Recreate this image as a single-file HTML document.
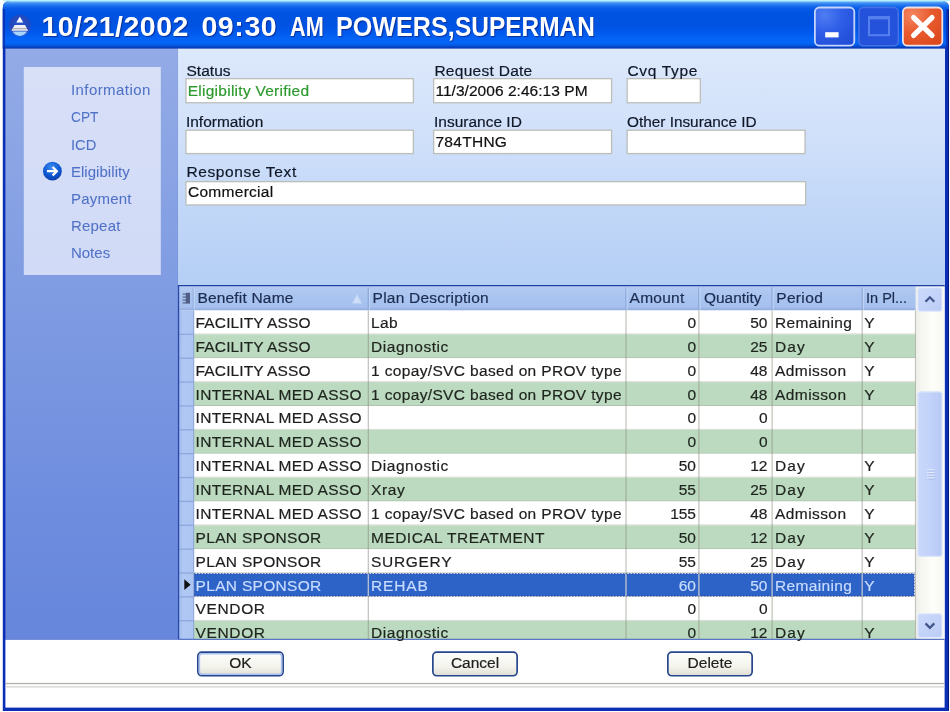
<!DOCTYPE html>
<html lang="en"><head><meta charset="utf-8"><title>10/21/2002 09:30 AM POWERS,SUPERMAN</title>
<style>
html,body{margin:0;padding:0;background:#fff;}
body{width:950px;height:712px;position:relative;overflow:hidden;font-family:"Liberation Sans",sans-serif;}
#bgsvg{filter:blur(0.4px);}
#txt{position:absolute;left:0;top:0;width:950px;height:712px;will-change:transform;filter:blur(0.4px);}
.t{position:absolute;white-space:nowrap;-webkit-text-stroke:0.2px currentColor;}
</style></head>
<body>
<svg id="bgsvg" width="950" height="712" viewBox="0 0 950 712" style="position:absolute;left:0;top:0">
<defs><linearGradient id="gt" x1="0" y1="0" x2="0" y2="1"><stop offset="0" stop-color="#a8e2f8"/><stop offset=".035" stop-color="#4a98f6"/><stop offset=".08" stop-color="#2578f0"/><stop offset=".15" stop-color="#0a5ce8"/><stop offset=".24" stop-color="#0054e3"/><stop offset=".45" stop-color="#0052e0"/><stop offset=".62" stop-color="#0056e8"/><stop offset=".78" stop-color="#0462f4"/><stop offset=".88" stop-color="#0566f6"/><stop offset=".93" stop-color="#0458e4"/><stop offset=".97" stop-color="#0540c0"/><stop offset="1" stop-color="#0836a8"/></linearGradient><linearGradient id="gs" x1="0" y1="0" x2="0" y2="1"><stop offset="0" stop-color="#93abe6"/><stop offset=".2" stop-color="#8aa4e4"/><stop offset=".5" stop-color="#7b98e1"/><stop offset=".8" stop-color="#6d8cde"/><stop offset="1" stop-color="#6686dc"/></linearGradient><linearGradient id="gsi" x1="0" y1="0" x2="0" y2="1"><stop offset="0" stop-color="#d8e0f8"/><stop offset="1" stop-color="#d1daf6"/></linearGradient><linearGradient id="gm" x1="0" y1="0" x2="0" y2="1"><stop offset="0" stop-color="#dce8fb"/><stop offset=".3" stop-color="#d3e2fa"/><stop offset=".65" stop-color="#c3d8f8"/><stop offset="1" stop-color="#b4cef5"/></linearGradient><linearGradient id="gh" x1="0" y1="0" x2="0" y2="1"><stop offset="0" stop-color="#b4cbf2"/><stop offset=".4" stop-color="#a9c4ef"/><stop offset=".85" stop-color="#a6c1ee"/><stop offset="1" stop-color="#8fa9dc"/></linearGradient><linearGradient id="grs" x1="0" y1="0" x2="1" y2="0"><stop offset="0" stop-color="#9db8ed"/><stop offset=".35" stop-color="#b0c8f3"/><stop offset="1" stop-color="#acc5f2"/></linearGradient><linearGradient id="gsb" x1="0" y1="0" x2="1" y2="0"><stop offset="0" stop-color="#eeeee8"/><stop offset=".2" stop-color="#f7f7f1"/><stop offset=".6" stop-color="#fdfdf9"/><stop offset="1" stop-color="#f8f8f3"/></linearGradient><linearGradient id="gth" x1="0" y1="0" x2="1" y2="0"><stop offset="0" stop-color="#c9d7fb"/><stop offset=".5" stop-color="#c2d2f9"/><stop offset="1" stop-color="#b7caf5"/></linearGradient><linearGradient id="gsbb" x1="0" y1="0" x2="1" y2="1"><stop offset="0" stop-color="#cbd9fb"/><stop offset="1" stop-color="#bccdf6"/></linearGradient><linearGradient id="gbtn" x1="0" y1="0" x2="0" y2="1"><stop offset="0" stop-color="#fdfdfb"/><stop offset=".6" stop-color="#f4f4ee"/><stop offset="1" stop-color="#e0ded4"/></linearGradient><radialGradient id="gcb" cx="25%" cy="20%" r="90%"><stop offset="0" stop-color="#4f7cf2"/><stop offset=".5" stop-color="#2f5fe8"/><stop offset="1" stop-color="#224ed8"/></radialGradient><radialGradient id="gcx" cx="25%" cy="20%" r="90%"><stop offset="0" stop-color="#f38660"/><stop offset=".5" stop-color="#e95c30"/><stop offset="1" stop-color="#dd4a1c"/></radialGradient><radialGradient id="ag" cx="50%" cy="40%" r="60%"><stop offset="0" stop-color="#2f55c8"/><stop offset=".8" stop-color="#2344b4"/><stop offset="1" stop-color="#3c66d8"/></radialGradient><radialGradient id="bg" cx="45%" cy="30%" r="70%"><stop offset="0" stop-color="#3f8cf0"/><stop offset=".6" stop-color="#0f5ad4"/><stop offset="1" stop-color="#0a3ea8"/></radialGradient><clipPath id="gclip"><rect x="177.400" y="284.9" width="767.6" height="355.4"/></clipPath></defs>
<rect x="3" y="0" width="947" height="1.1" fill="#b6f0fa"/>
<path d="M2.8 711 L2.800 8 Q2.800 1 9.8 1 L942 1 Q949 1 949 8 L949 711 Z" fill="#0a2fb4"/>
<path d="M2.8 48.6 L2.800 8 Q2.800 1 9.8 1 L942 1 Q949 1 949 8 L949 48.6 Z" fill="url(#gt)"/>
<rect x="2.8" y="9" width="2.2" height="39.6" fill="#0a2aa8" opacity=".75"/><rect x="946" y="9" width="3" height="39.6" fill="#0a2aa8" opacity=".75"/>
<rect x="948" y="10" width="1" height="701" fill="#06187c"/>
<g transform="translate(7,12.5)"><circle cx="12.8" cy="13" r="10.8" fill="url(#ag)" opacity=".9"/><path d="M12.8 4.2 L16.300 9.900 L9.300 9.900 Z" fill="#fff"/><path d="M7.6 12.6 L18 12.6 L21.2 18.2 L4.4 18.2 Z" fill="#f2f2f6"/><rect x="5.6" y="15.4" width="14.4" height="1.5" fill="#b4b4bc"/><path d="M5.6 19 L20 19 Q17 23.4 12.8 23.4 Q8.600 23.4 5.600 19 Z" fill="#a6d6fb"/></g>
<rect x="814.9" y="7.5" width="39.4" height="38.2" rx="4.5" fill="url(#gcb)" stroke="#c4d4fa" stroke-width="1.8"/><rect x="825.2" y="32.2" width="13.4" height="5.2" fill="#fff"/>
<rect x="858.9" y="7.5" width="39.4" height="38.2" rx="4.5" fill="#2552da" stroke="#4672e6" stroke-width="1.5"/><rect x="869" y="17.200" width="20" height="18" fill="none" stroke="#5580ee" stroke-width="2"/><rect x="868" y="16.200" width="22" height="3.2" fill="#5580ee"/>
<rect x="902.9" y="7.5" width="39.4" height="38.2" rx="4.5" fill="url(#gcx)" stroke="#efe0e4" stroke-width="1.8"/><path d="M913.6 17.6 L932 35.4 M932 17.6 L913.600 35.4" stroke="#fff" stroke-width="5.2" stroke-linecap="round" fill="none"/>
<rect x="5.4" y="48.6" width="172.4" height="591.2" fill="url(#gs)"/>
<rect x="23.8" y="67" width="137" height="208" fill="url(#gsi)"/>
<g transform="translate(41.4,160.2)"><circle cx="11" cy="11" r="9.4" fill="url(#bg)"/><path d="M5.6 11 L15 11 M11.2 6.800 L15.400 11 L11.200 15.2" fill="none" stroke="#fff" stroke-width="2.3"/></g>
<rect x="177.800" y="48.6" width="767.2" height="236.8" fill="url(#gm)"/>
<rect x="185.95" y="78.65" width="227.40" height="24.10" fill="#fff" stroke="#bcbeba" stroke-width="1.3"/>
<rect x="433.65" y="78.65" width="177.90" height="24.10" fill="#fff" stroke="#bcbeba" stroke-width="1.3"/>
<rect x="627.15" y="78.65" width="73.20" height="24.10" fill="#fff" stroke="#bcbeba" stroke-width="1.3"/>
<rect x="185.95" y="130.25" width="227.40" height="23.30" fill="#fff" stroke="#bcbeba" stroke-width="1.3"/>
<rect x="433.65" y="130.25" width="177.90" height="23.30" fill="#fff" stroke="#bcbeba" stroke-width="1.3"/>
<rect x="627.15" y="130.25" width="177.90" height="23.30" fill="#fff" stroke="#bcbeba" stroke-width="1.3"/>
<rect x="185.95" y="181.65" width="619.70" height="23.30" fill="#fff" stroke="#bcbeba" stroke-width="1.3"/>
<g clip-path="url(#gclip)">
<rect x="177.8" y="285.3" width="766.8" height="354.49999999999994" fill="#fff"/>
<rect x="177.8" y="286.3" width="737.9000000000001" height="24.20" fill="url(#gh)"/>
<rect x="194" y="310.50" width="721.70" height="23.87" fill="#fff"/>
<rect x="194" y="333.47" width="721.70" height="0.9" fill="#9a9a90" opacity=".4"/>
<rect x="194" y="334.37" width="721.70" height="23.87" fill="#bcdabf"/>
<rect x="194" y="357.34" width="721.70" height="0.9" fill="#9a9a90" opacity=".4"/>
<rect x="194" y="358.24" width="721.70" height="23.87" fill="#fff"/>
<rect x="194" y="381.21" width="721.70" height="0.9" fill="#9a9a90" opacity=".4"/>
<rect x="194" y="382.11" width="721.70" height="23.87" fill="#bcdabf"/>
<rect x="194" y="405.08" width="721.70" height="0.9" fill="#9a9a90" opacity=".4"/>
<rect x="194" y="405.98" width="721.70" height="23.87" fill="#fff"/>
<rect x="194" y="428.95" width="721.70" height="0.9" fill="#9a9a90" opacity=".4"/>
<rect x="194" y="429.85" width="721.70" height="23.87" fill="#bcdabf"/>
<rect x="194" y="452.82" width="721.70" height="0.9" fill="#9a9a90" opacity=".4"/>
<rect x="194" y="453.72" width="721.70" height="23.87" fill="#fff"/>
<rect x="194" y="476.69" width="721.70" height="0.9" fill="#9a9a90" opacity=".4"/>
<rect x="194" y="477.59" width="721.70" height="23.87" fill="#bcdabf"/>
<rect x="194" y="500.56" width="721.70" height="0.9" fill="#9a9a90" opacity=".4"/>
<rect x="194" y="501.46" width="721.70" height="23.87" fill="#fff"/>
<rect x="194" y="524.43" width="721.70" height="0.9" fill="#9a9a90" opacity=".4"/>
<rect x="194" y="525.33" width="721.70" height="23.87" fill="#bcdabf"/>
<rect x="194" y="548.30" width="721.70" height="0.9" fill="#9a9a90" opacity=".4"/>
<rect x="194" y="549.20" width="721.70" height="23.87" fill="#fff"/>
<rect x="194" y="572.17" width="721.70" height="0.9" fill="#9a9a90" opacity=".4"/>
<rect x="194" y="573.07" width="721.70" height="23.87" fill="#fff"/>
<rect x="194" y="596.04" width="721.70" height="0.9" fill="#9a9a90" opacity=".4"/>
<rect x="194" y="573.77" width="720.10" height="22.27" fill="#2d62c7" stroke="#2a4a9c" stroke-width="1" stroke-dasharray="1.5 1.5"/>
<rect x="194" y="596.94" width="721.70" height="23.87" fill="#fff"/>
<rect x="194" y="619.91" width="721.70" height="0.9" fill="#9a9a90" opacity=".4"/>
<rect x="194" y="620.81" width="721.70" height="23.87" fill="#bcdabf"/>
<rect x="194" y="643.78" width="721.70" height="0.9" fill="#9a9a90" opacity=".4"/>
<rect x="177.8" y="310.5" width="16.20" height="329.30" fill="url(#grs)"/>
<rect x="192.7" y="287.50" width="1" height="22" fill="#8aa6da"/><rect x="193.7" y="287.50" width="1" height="22" fill="#c6d8f6"/>
<rect x="193.2" y="310.5" width="1" height="329.30" fill="#8ea4d4"/>
<rect x="177.8" y="333.67" width="16.20" height="1.3" fill="#8fa7de"/>
<rect x="177.8" y="357.54" width="16.20" height="1.3" fill="#8fa7de"/>
<rect x="177.8" y="381.41" width="16.20" height="1.3" fill="#8fa7de"/>
<rect x="177.8" y="405.28" width="16.20" height="1.3" fill="#8fa7de"/>
<rect x="177.8" y="429.15" width="16.20" height="1.3" fill="#8fa7de"/>
<rect x="177.8" y="453.02" width="16.20" height="1.3" fill="#8fa7de"/>
<rect x="177.8" y="476.89" width="16.20" height="1.3" fill="#8fa7de"/>
<rect x="177.8" y="500.76" width="16.20" height="1.3" fill="#8fa7de"/>
<rect x="177.8" y="524.63" width="16.20" height="1.3" fill="#8fa7de"/>
<rect x="177.8" y="548.50" width="16.20" height="1.3" fill="#8fa7de"/>
<rect x="177.8" y="572.37" width="16.20" height="1.3" fill="#8fa7de"/>
<rect x="177.8" y="596.24" width="16.20" height="1.3" fill="#8fa7de"/>
<rect x="177.8" y="620.11" width="16.20" height="1.3" fill="#8fa7de"/>
<rect x="177.8" y="643.98" width="16.20" height="1.3" fill="#8fa7de"/>
<rect x="367.70" y="310.5" width="1.2" height="329.30" fill="#8c8c82" opacity=".55"/>
<rect x="367.70" y="287.50" width="1.2" height="22" fill="#86a2d8"/><rect x="368.90" y="287.50" width="1" height="22" fill="#c6d8f6"/>
<rect x="625.40" y="310.5" width="1.2" height="329.30" fill="#8c8c82" opacity=".55"/>
<rect x="625.40" y="287.50" width="1.2" height="22" fill="#86a2d8"/><rect x="626.60" y="287.50" width="1" height="22" fill="#c6d8f6"/>
<rect x="698.30" y="310.5" width="1.2" height="329.30" fill="#8c8c82" opacity=".55"/>
<rect x="698.30" y="287.50" width="1.2" height="22" fill="#86a2d8"/><rect x="699.50" y="287.50" width="1" height="22" fill="#c6d8f6"/>
<rect x="771.50" y="310.5" width="1.2" height="329.30" fill="#8c8c82" opacity=".55"/>
<rect x="771.50" y="287.50" width="1.2" height="22" fill="#86a2d8"/><rect x="772.70" y="287.50" width="1" height="22" fill="#c6d8f6"/>
<rect x="861.60" y="310.5" width="1.2" height="329.30" fill="#8c8c82" opacity=".55"/>
<rect x="861.60" y="287.50" width="1.2" height="22" fill="#86a2d8"/><rect x="862.80" y="287.50" width="1" height="22" fill="#c6d8f6"/>
<rect x="367.70" y="574.07" width="1.2" height="21.87" fill="#b9c6dc"/>
<rect x="625.40" y="574.07" width="1.2" height="21.87" fill="#b9c6dc"/>
<rect x="698.30" y="574.07" width="1.2" height="21.87" fill="#b9c6dc"/>
<rect x="771.50" y="574.07" width="1.2" height="21.87" fill="#b9c6dc"/>
<rect x="861.60" y="574.07" width="1.2" height="21.87" fill="#b9c6dc"/>
<rect x="914.90" y="310.5" width="1.4" height="329.30" fill="#a8a89e" opacity=".7"/>
<rect x="916.10" y="286.3" width="28.50" height="353.50" fill="url(#gsb)"/>
<rect x="917.8" y="287.6" width="24.2" height="23.8" rx="2.5" fill="url(#gsbb)" stroke="#e2eafc" stroke-width="1.2"/>
<path d="M925.5 301.7 L929.9 297.3 L934.3 301.7" fill="none" stroke="#44578c" stroke-width="2.3"/>
<rect x="917.8" y="391.8" width="24.2" height="164.6" rx="2.5" fill="url(#gth)" stroke="#dbe5fc" stroke-width="1.2"/>
<rect x="927" y="469.2" width="7.6" height="1.2" fill="#eaf0fe" opacity=".8"/><rect x="927.6" y="470.4" width="7.6" height="1.2" fill="#9fb4e6" opacity=".55"/>
<rect x="927" y="471.9" width="7.6" height="1.2" fill="#eaf0fe" opacity=".8"/><rect x="927.6" y="473.1" width="7.6" height="1.2" fill="#9fb4e6" opacity=".55"/>
<rect x="927" y="474.6" width="7.6" height="1.2" fill="#eaf0fe" opacity=".8"/><rect x="927.6" y="475.8" width="7.6" height="1.2" fill="#9fb4e6" opacity=".55"/>
<rect x="927" y="477.3" width="7.6" height="1.2" fill="#eaf0fe" opacity=".8"/><rect x="927.6" y="478.5" width="7.6" height="1.2" fill="#9fb4e6" opacity=".55"/>
<rect x="917.8" y="613.7" width="24.2" height="23.8" rx="2.5" fill="url(#gsbb)" stroke="#e2eafc" stroke-width="1.2"/>
<path d="M925.5 623.4 L929.9 627.8 L934.3 623.4" fill="none" stroke="#44578c" stroke-width="2.3"/>
<rect x="177.8" y="284.90000000000003" width="766.8" height="1.4" fill="#2040a4"/>
<rect x="177.8" y="285.3" width="1.4" height="354.49999999999994" fill="#2a48a8"/>
<rect x="177.8" y="638.8" width="766.8" height="1.4" fill="#3454b8"/>
</g>
<g fill="#4c5a82"><rect x="185.8" y="292.8" width="4.2" height="10.8" opacity=".95"/><rect x="182.6" y="293.4" width="3.4" height="1.4" opacity=".75"/><rect x="182.6" y="296.4" width="3.4" height="1.4" opacity=".75"/><rect x="182.6" y="299.4" width="3.4" height="1.4" opacity=".75"/><rect x="182.6" y="302.2" width="3.4" height="1.4" opacity=".75"/></g>
<path d="M357 294.4 L361.6 303.2 L352.400 303.2 Z" fill="#cfdff8" stroke="#bdd1f5" stroke-width="1"/>
<path d="M184.3 579.27 l6.3 5.4 l-6.3 5.4 Z" fill="#101010"/>
<rect x="5.4" y="639.8" width="939.2" height="67.8" fill="#fff"/>
<rect x="5.4" y="682.9" width="939.2" height="1.3" fill="#b2b2ae"/><rect x="5.4" y="686.2" width="939.2" height="1.3" fill="#d4d4d0"/>
<rect x="197.85" y="652.15" width="85.30" height="23.60" rx="4" fill="url(#gbtn)" stroke="#27478c" stroke-width="1.7"/>
<rect x="199.40" y="653.70" width="82.20" height="20.50" rx="2.5" fill="none" stroke="#a9c1f0" stroke-width="1.5"/>
<rect x="432.85" y="652.15" width="84.30" height="23.60" rx="4" fill="url(#gbtn)" stroke="#27478c" stroke-width="1.7"/>
<rect x="667.85" y="652.15" width="84.30" height="23.60" rx="4" fill="url(#gbtn)" stroke="#27478c" stroke-width="1.7"/>
</svg>
<div id="txt">
<span class="t" id="t0" style="font:700 28.5px/28.5px 'Liberation Sans',sans-serif;color:#fff;top:11.87px;left:41.40px;letter-spacing:0.477px;text-shadow:1px 1px 1px rgba(10,30,120,.7);-webkit-text-stroke:0;">10/21/2002</span>
<span class="t" id="t1" style="font:700 28.5px/28.5px 'Liberation Sans',sans-serif;color:#fff;top:11.87px;left:201.40px;letter-spacing:0.601px;text-shadow:1px 1px 1px rgba(10,30,120,.7);-webkit-text-stroke:0;">09:30</span>
<span class="t" id="t2" style="font:700 28.5px/28.5px 'Liberation Sans',sans-serif;color:#fff;top:11.87px;left:289.90px;transform:scaleX(0.7605);transform-origin:0 0;text-shadow:1px 1px 1px rgba(10,30,120,.7);-webkit-text-stroke:0;">AM</span>
<span class="t" id="t3" style="font:700 28.5px/28.5px 'Liberation Sans',sans-serif;color:#fff;top:11.87px;left:335.60px;transform:scaleX(0.8819);transform-origin:0 0;text-shadow:1px 1px 1px rgba(10,30,120,.7);-webkit-text-stroke:0;">POWERS,</span>
<span class="t" id="t4" style="font:700 28.5px/28.5px 'Liberation Sans',sans-serif;color:#fff;top:11.87px;left:455.30px;transform:scaleX(0.8572);transform-origin:0 0;text-shadow:1px 1px 1px rgba(10,30,120,.7);-webkit-text-stroke:0;">SUPERMAN</span>
<span class="t" id="t5" style="font:400 15px/15px 'Liberation Sans',sans-serif;color:#5071c6;top:82.30px;left:70.90px;letter-spacing:0.441px;-webkit-text-stroke:0.05px;">Information</span>
<span class="t" id="t6" style="font:400 15px/15px 'Liberation Sans',sans-serif;color:#5071c6;top:109.30px;left:70.90px;transform:scaleX(0.9133);transform-origin:0 0;-webkit-text-stroke:0.05px;">CPT</span>
<span class="t" id="t7" style="font:400 15px/15px 'Liberation Sans',sans-serif;color:#5071c6;top:136.90px;left:70.90px;transform:scaleX(0.9828);transform-origin:0 0;-webkit-text-stroke:0.05px;">ICD</span>
<span class="t" id="t8" style="font:400 15px/15px 'Liberation Sans',sans-serif;color:#5071c6;top:163.80px;left:70.90px;letter-spacing:0.049px;-webkit-text-stroke:0.05px;">Eligibility</span>
<span class="t" id="t9" style="font:400 15px/15px 'Liberation Sans',sans-serif;color:#5071c6;top:190.90px;left:70.90px;letter-spacing:0.242px;-webkit-text-stroke:0.05px;">Payment</span>
<span class="t" id="t10" style="font:400 15px/15px 'Liberation Sans',sans-serif;color:#5071c6;top:218.30px;left:70.90px;letter-spacing:0.221px;-webkit-text-stroke:0.05px;">Repeat</span>
<span class="t" id="t11" style="font:400 15px/15px 'Liberation Sans',sans-serif;color:#5071c6;top:245.30px;left:70.90px;letter-spacing:0.022px;-webkit-text-stroke:0.05px;">Notes</span>
<span class="t" id="t12" style="font:400 15.5px/15.5px 'Liberation Sans',sans-serif;color:#101828;top:62.88px;left:186.40px;letter-spacing:0.046px;">Status</span>
<span class="t" id="t13" style="font:400 15.5px/15.5px 'Liberation Sans',sans-serif;color:#101828;top:62.88px;left:434.40px;letter-spacing:0.279px;">Request Date</span>
<span class="t" id="t14" style="font:400 15.5px/15.5px 'Liberation Sans',sans-serif;color:#101828;top:62.88px;left:627.40px;letter-spacing:0.691px;">Cvq Type</span>
<span class="t" id="t15" style="font:400 15.5px/15.5px 'Liberation Sans',sans-serif;color:#101828;top:114.08px;left:186.40px;transform:scaleX(0.9959);transform-origin:0 0;">Information</span>
<span class="t" id="t16" style="font:400 15.5px/15.5px 'Liberation Sans',sans-serif;color:#101828;top:114.08px;left:434.40px;transform:scaleX(0.9993);transform-origin:0 0;">Insurance ID</span>
<span class="t" id="t17" style="font:400 15.5px/15.5px 'Liberation Sans',sans-serif;color:#101828;top:114.08px;left:627.40px;transform:scaleX(0.9899);transform-origin:0 0;">Other Insurance ID</span>
<span class="t" id="t18" style="font:400 15.5px/15.5px 'Liberation Sans',sans-serif;color:#101828;top:163.58px;left:186.40px;letter-spacing:0.629px;">Response Text</span>
<span class="t" id="t19" style="font:400 15.5px/15.5px 'Liberation Sans',sans-serif;color:#2e9a2e;top:82.88px;left:187.70px;letter-spacing:0.266px;">Eligibility Verified</span>
<span class="t" id="t20" style="font:400 15.5px/15.5px 'Liberation Sans',sans-serif;color:#101010;top:82.88px;left:435.40px;letter-spacing:0.042px;">11/3/2006 2:46:13 PM</span>
<span class="t" id="t21" style="font:400 15.5px/15.5px 'Liberation Sans',sans-serif;color:#101010;top:134.38px;left:435.40px;letter-spacing:0.293px;">784THNG</span>
<span class="t" id="t22" style="font:400 15.5px/15.5px 'Liberation Sans',sans-serif;color:#101010;top:184.08px;left:188.00px;letter-spacing:0.274px;">Commercial</span>
<span class="t" id="t23" style="font:400 15.5px/15.5px 'Liberation Sans',sans-serif;color:#1c2c50;top:290.38px;left:197.40px;letter-spacing:0.192px;">Benefit Name</span>
<span class="t" id="t24" style="font:400 15.5px/15.5px 'Liberation Sans',sans-serif;color:#1c2c50;top:290.38px;left:372.60px;letter-spacing:0.211px;">Plan Description</span>
<span class="t" id="t25" style="font:400 15.5px/15.5px 'Liberation Sans',sans-serif;color:#1c2c50;top:290.38px;left:629.60px;letter-spacing:0.251px;">Amount</span>
<span class="t" id="t26" style="font:400 15.5px/15.5px 'Liberation Sans',sans-serif;color:#1c2c50;top:290.38px;left:703.70px;transform:scaleX(0.9947);transform-origin:0 0;">Quantity</span>
<span class="t" id="t27" style="font:400 15.5px/15.5px 'Liberation Sans',sans-serif;color:#1c2c50;top:290.38px;left:776.20px;letter-spacing:0.353px;">Period</span>
<span class="t" id="t28" style="font:400 15.5px/15.5px 'Liberation Sans',sans-serif;color:#1c2c50;top:290.38px;left:865.80px;transform:scaleX(0.9361);transform-origin:0 0;">In Pl...</span>
<span class="t" id="t29" style="font:400 15.5px/15.5px 'Liberation Sans',sans-serif;color:#1e1e1e;top:314.98px;left:195.60px;letter-spacing:0.130px;">FACILITY ASSO</span>
<span class="t" id="t30" style="font:400 15.5px/15.5px 'Liberation Sans',sans-serif;color:#1e1e1e;top:314.98px;left:371.00px;letter-spacing:0.352px;">Lab</span>
<span class="t" id="t31" style="font:400 15.5px/15.5px 'Liberation Sans',sans-serif;color:#1e1e1e;top:314.98px;right:254.00px;">0</span>
<span class="t" id="t32" style="font:400 15.5px/15.5px 'Liberation Sans',sans-serif;color:#1e1e1e;top:314.98px;right:182.50px;">50</span>
<span class="t" id="t33" style="font:400 15.5px/15.5px 'Liberation Sans',sans-serif;color:#1e1e1e;top:314.98px;left:775.00px;letter-spacing:0.358px;">Remaining</span>
<span class="t" id="t34" style="font:400 15.5px/15.5px 'Liberation Sans',sans-serif;color:#1e1e1e;top:314.98px;left:864.20px;letter-spacing:2.586px;">Y</span>
<span class="t" id="t35" style="font:400 15.5px/15.5px 'Liberation Sans',sans-serif;color:#1e241e;top:338.85px;left:195.60px;letter-spacing:0.130px;">FACILITY ASSO</span>
<span class="t" id="t36" style="font:400 15.5px/15.5px 'Liberation Sans',sans-serif;color:#1e241e;top:338.85px;left:371.00px;letter-spacing:0.546px;">Diagnostic</span>
<span class="t" id="t37" style="font:400 15.5px/15.5px 'Liberation Sans',sans-serif;color:#1e241e;top:338.85px;right:254.00px;">0</span>
<span class="t" id="t38" style="font:400 15.5px/15.5px 'Liberation Sans',sans-serif;color:#1e241e;top:338.85px;right:182.50px;">25</span>
<span class="t" id="t39" style="font:400 15.5px/15.5px 'Liberation Sans',sans-serif;color:#1e241e;top:338.85px;left:775.00px;letter-spacing:1.151px;">Day</span>
<span class="t" id="t40" style="font:400 15.5px/15.5px 'Liberation Sans',sans-serif;color:#1e241e;top:338.85px;left:864.20px;letter-spacing:2.586px;">Y</span>
<span class="t" id="t41" style="font:400 15.5px/15.5px 'Liberation Sans',sans-serif;color:#1e1e1e;top:362.72px;left:195.60px;letter-spacing:0.130px;">FACILITY ASSO</span>
<span class="t" id="t42" style="font:400 15.5px/15.5px 'Liberation Sans',sans-serif;color:#1e1e1e;top:362.72px;left:371.00px;letter-spacing:0.351px;">1 copay/SVC based on PROV type</span>
<span class="t" id="t43" style="font:400 15.5px/15.5px 'Liberation Sans',sans-serif;color:#1e1e1e;top:362.72px;right:254.00px;">0</span>
<span class="t" id="t44" style="font:400 15.5px/15.5px 'Liberation Sans',sans-serif;color:#1e1e1e;top:362.72px;right:182.50px;">48</span>
<span class="t" id="t45" style="font:400 15.5px/15.5px 'Liberation Sans',sans-serif;color:#1e1e1e;top:362.72px;left:775.00px;letter-spacing:0.421px;">Admisson</span>
<span class="t" id="t46" style="font:400 15.5px/15.5px 'Liberation Sans',sans-serif;color:#1e1e1e;top:362.72px;left:864.20px;letter-spacing:2.586px;">Y</span>
<span class="t" id="t47" style="font:400 15.5px/15.5px 'Liberation Sans',sans-serif;color:#1e241e;top:386.59px;left:195.60px;letter-spacing:0.287px;">INTERNAL MED ASSO</span>
<span class="t" id="t48" style="font:400 15.5px/15.5px 'Liberation Sans',sans-serif;color:#1e241e;top:386.59px;left:371.00px;letter-spacing:0.351px;">1 copay/SVC based on PROV type</span>
<span class="t" id="t49" style="font:400 15.5px/15.5px 'Liberation Sans',sans-serif;color:#1e241e;top:386.59px;right:254.00px;">0</span>
<span class="t" id="t50" style="font:400 15.5px/15.5px 'Liberation Sans',sans-serif;color:#1e241e;top:386.59px;right:182.50px;">48</span>
<span class="t" id="t51" style="font:400 15.5px/15.5px 'Liberation Sans',sans-serif;color:#1e241e;top:386.59px;left:775.00px;letter-spacing:0.421px;">Admisson</span>
<span class="t" id="t52" style="font:400 15.5px/15.5px 'Liberation Sans',sans-serif;color:#1e241e;top:386.59px;left:864.20px;letter-spacing:2.586px;">Y</span>
<span class="t" id="t53" style="font:400 15.5px/15.5px 'Liberation Sans',sans-serif;color:#1e1e1e;top:410.46px;left:195.60px;letter-spacing:0.287px;">INTERNAL MED ASSO</span>
<span class="t" id="t54" style="font:400 15.5px/15.5px 'Liberation Sans',sans-serif;color:#1e1e1e;top:410.46px;right:254.00px;">0</span>
<span class="t" id="t55" style="font:400 15.5px/15.5px 'Liberation Sans',sans-serif;color:#1e1e1e;top:410.46px;right:182.50px;">0</span>
<span class="t" id="t56" style="font:400 15.5px/15.5px 'Liberation Sans',sans-serif;color:#1e241e;top:434.33px;left:195.60px;letter-spacing:0.287px;">INTERNAL MED ASSO</span>
<span class="t" id="t57" style="font:400 15.5px/15.5px 'Liberation Sans',sans-serif;color:#1e241e;top:434.33px;right:254.00px;">0</span>
<span class="t" id="t58" style="font:400 15.5px/15.5px 'Liberation Sans',sans-serif;color:#1e241e;top:434.33px;right:182.50px;">0</span>
<span class="t" id="t59" style="font:400 15.5px/15.5px 'Liberation Sans',sans-serif;color:#1e1e1e;top:458.20px;left:195.60px;letter-spacing:0.287px;">INTERNAL MED ASSO</span>
<span class="t" id="t60" style="font:400 15.5px/15.5px 'Liberation Sans',sans-serif;color:#1e1e1e;top:458.20px;left:371.00px;letter-spacing:0.546px;">Diagnostic</span>
<span class="t" id="t61" style="font:400 15.5px/15.5px 'Liberation Sans',sans-serif;color:#1e1e1e;top:458.20px;right:254.00px;">50</span>
<span class="t" id="t62" style="font:400 15.5px/15.5px 'Liberation Sans',sans-serif;color:#1e1e1e;top:458.20px;right:182.50px;">12</span>
<span class="t" id="t63" style="font:400 15.5px/15.5px 'Liberation Sans',sans-serif;color:#1e1e1e;top:458.20px;left:775.00px;letter-spacing:1.151px;">Day</span>
<span class="t" id="t64" style="font:400 15.5px/15.5px 'Liberation Sans',sans-serif;color:#1e1e1e;top:458.20px;left:864.20px;letter-spacing:2.586px;">Y</span>
<span class="t" id="t65" style="font:400 15.5px/15.5px 'Liberation Sans',sans-serif;color:#1e241e;top:482.07px;left:195.60px;letter-spacing:0.287px;">INTERNAL MED ASSO</span>
<span class="t" id="t66" style="font:400 15.5px/15.5px 'Liberation Sans',sans-serif;color:#1e241e;top:482.07px;left:371.00px;letter-spacing:0.639px;">Xray</span>
<span class="t" id="t67" style="font:400 15.5px/15.5px 'Liberation Sans',sans-serif;color:#1e241e;top:482.07px;right:254.00px;">55</span>
<span class="t" id="t68" style="font:400 15.5px/15.5px 'Liberation Sans',sans-serif;color:#1e241e;top:482.07px;right:182.50px;">25</span>
<span class="t" id="t69" style="font:400 15.5px/15.5px 'Liberation Sans',sans-serif;color:#1e241e;top:482.07px;left:775.00px;letter-spacing:1.151px;">Day</span>
<span class="t" id="t70" style="font:400 15.5px/15.5px 'Liberation Sans',sans-serif;color:#1e241e;top:482.07px;left:864.20px;letter-spacing:2.586px;">Y</span>
<span class="t" id="t71" style="font:400 15.5px/15.5px 'Liberation Sans',sans-serif;color:#1e1e1e;top:505.94px;left:195.60px;letter-spacing:0.287px;">INTERNAL MED ASSO</span>
<span class="t" id="t72" style="font:400 15.5px/15.5px 'Liberation Sans',sans-serif;color:#1e1e1e;top:505.94px;left:371.00px;letter-spacing:0.351px;">1 copay/SVC based on PROV type</span>
<span class="t" id="t73" style="font:400 15.5px/15.5px 'Liberation Sans',sans-serif;color:#1e1e1e;top:505.94px;right:254.00px;">155</span>
<span class="t" id="t74" style="font:400 15.5px/15.5px 'Liberation Sans',sans-serif;color:#1e1e1e;top:505.94px;right:182.50px;">48</span>
<span class="t" id="t75" style="font:400 15.5px/15.5px 'Liberation Sans',sans-serif;color:#1e1e1e;top:505.94px;left:775.00px;letter-spacing:0.421px;">Admisson</span>
<span class="t" id="t76" style="font:400 15.5px/15.5px 'Liberation Sans',sans-serif;color:#1e1e1e;top:505.94px;left:864.20px;letter-spacing:2.586px;">Y</span>
<span class="t" id="t77" style="font:400 15.5px/15.5px 'Liberation Sans',sans-serif;color:#1e241e;top:529.81px;left:195.60px;letter-spacing:0.310px;">PLAN SPONSOR</span>
<span class="t" id="t78" style="font:400 15.5px/15.5px 'Liberation Sans',sans-serif;color:#1e241e;top:529.81px;left:371.00px;letter-spacing:0.471px;">MEDICAL TREATMENT</span>
<span class="t" id="t79" style="font:400 15.5px/15.5px 'Liberation Sans',sans-serif;color:#1e241e;top:529.81px;right:254.00px;">50</span>
<span class="t" id="t80" style="font:400 15.5px/15.5px 'Liberation Sans',sans-serif;color:#1e241e;top:529.81px;right:182.50px;">12</span>
<span class="t" id="t81" style="font:400 15.5px/15.5px 'Liberation Sans',sans-serif;color:#1e241e;top:529.81px;left:775.00px;letter-spacing:1.151px;">Day</span>
<span class="t" id="t82" style="font:400 15.5px/15.5px 'Liberation Sans',sans-serif;color:#1e241e;top:529.81px;left:864.20px;letter-spacing:2.586px;">Y</span>
<span class="t" id="t83" style="font:400 15.5px/15.5px 'Liberation Sans',sans-serif;color:#1e1e1e;top:553.68px;left:195.60px;letter-spacing:0.310px;">PLAN SPONSOR</span>
<span class="t" id="t84" style="font:400 15.5px/15.5px 'Liberation Sans',sans-serif;color:#1e1e1e;top:553.68px;left:371.00px;letter-spacing:0.694px;">SURGERY</span>
<span class="t" id="t85" style="font:400 15.5px/15.5px 'Liberation Sans',sans-serif;color:#1e1e1e;top:553.68px;right:254.00px;">55</span>
<span class="t" id="t86" style="font:400 15.5px/15.5px 'Liberation Sans',sans-serif;color:#1e1e1e;top:553.68px;right:182.50px;">25</span>
<span class="t" id="t87" style="font:400 15.5px/15.5px 'Liberation Sans',sans-serif;color:#1e1e1e;top:553.68px;left:775.00px;letter-spacing:1.151px;">Day</span>
<span class="t" id="t88" style="font:400 15.5px/15.5px 'Liberation Sans',sans-serif;color:#1e1e1e;top:553.68px;left:864.20px;letter-spacing:2.586px;">Y</span>
<span class="t" id="t89" style="font:400 15.5px/15.5px 'Liberation Sans',sans-serif;color:#c8dcff;top:577.55px;left:195.60px;letter-spacing:0.310px;">PLAN SPONSOR</span>
<span class="t" id="t90" style="font:400 15.5px/15.5px 'Liberation Sans',sans-serif;color:#c8dcff;top:577.55px;left:371.00px;letter-spacing:0.865px;">REHAB</span>
<span class="t" id="t91" style="font:400 15.5px/15.5px 'Liberation Sans',sans-serif;color:#c8dcff;top:577.55px;right:254.00px;">60</span>
<span class="t" id="t92" style="font:400 15.5px/15.5px 'Liberation Sans',sans-serif;color:#c8dcff;top:577.55px;right:182.50px;">50</span>
<span class="t" id="t93" style="font:400 15.5px/15.5px 'Liberation Sans',sans-serif;color:#c8dcff;top:577.55px;left:775.00px;letter-spacing:0.358px;">Remaining</span>
<span class="t" id="t94" style="font:400 15.5px/15.5px 'Liberation Sans',sans-serif;color:#c8dcff;top:577.55px;left:864.20px;letter-spacing:2.586px;">Y</span>
<span class="t" id="t95" style="font:400 15.5px/15.5px 'Liberation Sans',sans-serif;color:#1e1e1e;top:601.42px;left:195.60px;letter-spacing:0.617px;">VENDOR</span>
<span class="t" id="t96" style="font:400 15.5px/15.5px 'Liberation Sans',sans-serif;color:#1e1e1e;top:601.42px;right:254.00px;">0</span>
<span class="t" id="t97" style="font:400 15.5px/15.5px 'Liberation Sans',sans-serif;color:#1e1e1e;top:601.42px;right:182.50px;">0</span>
<span class="t" id="t98" style="font:400 15.5px/15.5px 'Liberation Sans',sans-serif;color:#1e241e;top:625.29px;left:195.60px;letter-spacing:0.617px;">VENDOR</span>
<span class="t" id="t99" style="font:400 15.5px/15.5px 'Liberation Sans',sans-serif;color:#1e241e;top:625.29px;left:371.00px;letter-spacing:0.546px;">Diagnostic</span>
<span class="t" id="t100" style="font:400 15.5px/15.5px 'Liberation Sans',sans-serif;color:#1e241e;top:625.29px;right:254.00px;">0</span>
<span class="t" id="t101" style="font:400 15.5px/15.5px 'Liberation Sans',sans-serif;color:#1e241e;top:625.29px;right:182.50px;">12</span>
<span class="t" id="t102" style="font:400 15.5px/15.5px 'Liberation Sans',sans-serif;color:#1e241e;top:625.29px;left:775.00px;letter-spacing:1.151px;">Day</span>
<span class="t" id="t103" style="font:400 15.5px/15.5px 'Liberation Sans',sans-serif;color:#1e241e;top:625.29px;left:864.20px;letter-spacing:2.586px;">Y</span>
<span class="t" id="t104" style="font:400 15.5px/15.5px 'Liberation Sans',sans-serif;color:#202020;top:655.48px;left:197px;width:87px;text-align:center;">OK</span>
<span class="t" id="t105" style="font:400 15.5px/15.5px 'Liberation Sans',sans-serif;color:#202020;top:655.48px;left:432px;width:86px;text-align:center;">Cancel</span>
<span class="t" id="t106" style="font:400 15.5px/15.5px 'Liberation Sans',sans-serif;color:#202020;top:655.48px;left:667px;width:86px;text-align:center;">Delete</span>
</div>
</body></html>
